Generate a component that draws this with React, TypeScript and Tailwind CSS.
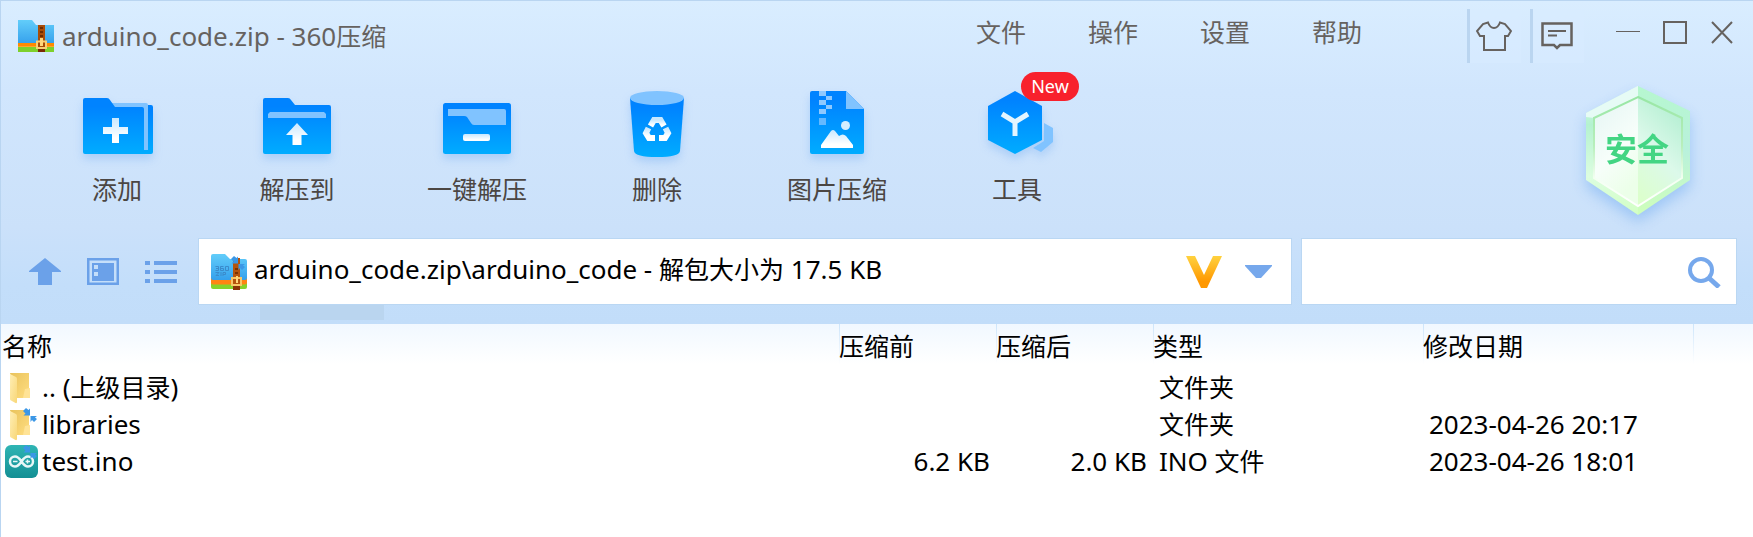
import type { ReactNode } from "react";

function Latin({ children }: { children: ReactNode }) {
  return <span className="text-[26px]">{children}</span>;
}

function Gradients() {
  return (
    <svg width="0" height="0" className="absolute" aria-hidden="true">
      <defs>
        <linearGradient id="blue" x1="0" y1="0" x2="0" y2="1">
          <stop offset="0.15" stopColor="#0083ff" />
          <stop offset="1" stopColor="#00acff" />
        </linearGradient>
        <linearGradient id="glyph" x1="0" y1="0" x2="0" y2="1">
          <stop offset="0" stopColor="#c9e8ff" />
          <stop offset="0.8" stopColor="#ffffff" />
        </linearGradient>
        <linearGradient id="sky" x1="0" y1="0" x2="0" y2="1">
          <stop offset="0" stopColor="#62cdfa" />
          <stop offset="1" stopColor="#35a0ec" />
        </linearGradient>
        <linearGradient id="gold" x1="0" y1="0" x2="0" y2="1">
          <stop offset="0" stopColor="#ffd23f" />
          <stop offset="0.8" stopColor="#ff9800" />
        </linearGradient>
        <linearGradient id="folderFront" x1="0" y1="0" x2="1" y2="1">
          <stop offset="0" stopColor="#ffeeb4" />
          <stop offset="1" stopColor="#f8d778" />
        </linearGradient>
        <linearGradient id="folderBack" x1="0" y1="0" x2="1" y2="1">
          <stop offset="0" stopColor="#e9c35c" />
          <stop offset="1" stopColor="#ffdd80" />
        </linearGradient>
        <linearGradient id="teal" x1="0" y1="0" x2="0" y2="1">
          <stop offset="0" stopColor="#2fb5b4" />
          <stop offset="1" stopColor="#138f94" />
        </linearGradient>
        <linearGradient id="rim" x1="0" y1="0" x2="0" y2="1">
          <stop offset="0" stopColor="#dffcf0" />
          <stop offset="0.3" stopColor="#b4f2d0" />
          <stop offset="0.7" stopColor="#dcfde0" />
          <stop offset="1" stopColor="#d2ffc4" />
        </linearGradient>
        <linearGradient id="rimRight" x1="0" y1="0" x2="0" y2="1">
          <stop offset="0" stopColor="#b6f7cf" />
          <stop offset="0.5" stopColor="#b9f1dc" />
          <stop offset="1" stopColor="#cfffba" />
        </linearGradient>
        <linearGradient id="faceLeft" x1="0" y1="0" x2="0.4" y2="1">
          <stop offset="0" stopColor="#e4f5f4" />
          <stop offset="0.6" stopColor="#f7fefa" />
          <stop offset="1" stopColor="#ecffe9" />
        </linearGradient>
        <linearGradient id="faceRight" x1="0.6" y1="0" x2="0.2" y2="1">
          <stop offset="0" stopColor="#b5efd3" />
          <stop offset="0.5" stopColor="#dcf9ea" />
          <stop offset="1" stopColor="#dcffcc" />
        </linearGradient>
        <linearGradient id="faceLine" x1="0" y1="0" x2="0" y2="1">
          <stop offset="0" stopColor="#98e6a4" />
          <stop offset="0.45" stopColor="#b8efbc" />
          <stop offset="0.75" stopColor="#f4fff2" />
          <stop offset="1" stopColor="#ffffff" />
        </linearGradient>
      </defs>
    </svg>
  );
}

function ToolIcon({ children }: { children: ReactNode }) {
  return (
    <svg width="80" height="84" viewBox="0 0 80 84" className="overflow-visible drop-shadow-[0_5px_4px_rgba(80,150,240,0.28)]" aria-hidden="true">
      {children}
    </svg>
  );
}

const addIcon = (
  <ToolIcon>
    <path d="M30 19H66L68 21H74Q76 21 76 23V68Q76 70 74 70H60Z" fill="url(#blue)" />
    <path d="M32 19H69Q71 19 71 21V66H64V24H34Z" fill="#80c3ff" />
    <path d="M8 14H30Q32 14 33 16L38 23H65Q67 23 67 25V70H8Q6 70 6 68V16Q6 14 8 14Z" fill="url(#blue)" />
    <path d="M35 34h7v9h9v7h-9v9h-7v-9h-9v-7h9z" fill="url(#glyph)" />
  </ToolIcon>
);

const extractToIcon = (
  <ToolIcon>
    <path d="M8 14H31Q33 14 34 16L38 21H72Q74 21 74 23V68Q74 70 72 70H8Q6 70 6 68V16Q6 14 8 14Z" fill="url(#blue)" />
    <path d="M13 28H67L69 30V34H11V30Z" fill="#80c3ff" />
    <path d="M40 39L51 51H44.500V61H35.500V51H29Z" fill="url(#glyph)" />
  </ToolIcon>
);

const extractHereIcon = (
  <ToolIcon>
    <rect x="6" y="19" width="68" height="51" rx="2.500" fill="url(#blue)" />
    <path d="M11 25H67Q69 25 69 27V41H37Q35 41 34 39L30 33Q29 32 27 32H11Z" fill="#80c3ff" />
    <rect x="26" y="50" width="27" height="7" rx="2" fill="url(#glyph)" />
  </ToolIcon>
);

const deleteIcon = (
  <ToolIcon>
    <path d="M13 14H67L63 67Q62 73 40 73T17 67Z" fill="url(#blue)" />
    <ellipse cx="40" cy="14" rx="27" ry="7" fill="#80c3ff" />
    <g fill="none" stroke="url(#glyph)" strokeWidth="6">
      <path d="M33.500 42L37 36H43.500L47 42" />
      <path d="M48.500 44L51 49L48 54H42" />
      <path d="M38 54H32L29 49L31.500 44" />
    </g>
  </ToolIcon>
);

const imageIcon = (
  <ToolIcon>
    <path d="M15 7H49L67 25V68Q67 70 65 70H15Q13 70 13 68V9Q13 7 15 7Z" fill="url(#blue)" />
    <path d="M49 7L67 25H49Z" fill="#80c3ff" />
    <g fill="#8fc9ff">
      <path d="M22 7h7v5h-7zM29 12h6v4h-6zM22 16h7v5h-7zM29 21h6v4h-6zM22 25h7v5h-7z" />
      <path d="M22 34h7v7h-7z" opacity="0.7" />
    </g>
    <circle cx="48.500" cy="41.500" r="4.500" fill="#d3edff" />
    <path d="M24 64V61L34 47Q36 45 38 47L42 52Q46 49 49 52L56 61V64Z" fill="url(#glyph)" />
  </ToolIcon>
);

const toolsIcon = (
  <ToolIcon>
    <path d="M67 39L76 44V58L64 68L56 64L67 57Z" fill="#80c3ff" />
    <path d="M38 7L65 22V56L38 70L11 56V22Z" fill="url(#blue)" />
    <path d="M25 30L38 38L51 30M38 37V52" fill="none" stroke="#e4f5ff" strokeWidth="5" />
  </ToolIcon>
);

const tools = [
  { label: "添加", icon: addIcon },
  { label: "解压到", icon: extractToIcon },
  { label: "一键解压", icon: extractHereIcon },
  { label: "删除", icon: deleteIcon },
  { label: "图片压缩", icon: imageIcon },
  { label: "工具", icon: toolsIcon, badge: "New" },
];

function AppIcon() {
  return (
    <svg width="36" height="32" viewBox="0 0 36 32" aria-hidden="true">
      <path d="M0 0H14L18 5H36V24H0Z" fill="url(#sky)" />
      <rect y="23" width="36" height="5" fill="#ff8a00" />
      <rect y="27" width="36" height="5" fill="#7ed02c" />
      <rect y="26" width="36" height="1" fill="#ffa42e" />
      <path d="M20 5h7v27h-7z" fill="#a84c08" />
      <path d="M22 7h3v2h-3zM22 11h3v2h-3zM22 15h3v2h-3z" fill="#6e2c00" />
      <path d="M20 29h7v3h-7z" fill="#7a2a05" />
      <rect x="19" y="21.500" width="9" height="6.500" fill="none" stroke="#f8cf74" strokeWidth="2" />
      <path d="M22 18h3v8h-3z" fill="#ffd67b" />
    </svg>
  );
}

function ShrinkArrows() {
  return (
    <g fill="#3b97e6">
      <path d="M0 3L3 0L5.500 2L7 0.500V7.500H0.500L2.500 5.500Z" />
      <path d="M14 11L11 14L9 12L7.500 14V8H14L12 9.500Z" />
    </g>
  );
}

function ArchiveIcon() {
  return (
    <svg width="36" height="36" viewBox="0 0 36 36" className="shrink-0" aria-hidden="true">
      <rect y="24" width="36" height="11" rx="2" fill="#86d32b" />
      <rect y="22" width="36" height="8.500" rx="2" fill="#ff8512" />
      <path d="M2 0H14L19 5H34Q36 5 36 7V24Q36 26 34 26H2Q0 26 0 24V2Q0 0 2 0Z" fill="url(#sky)" />
      <g fill="none" stroke="#3b8bcb" strokeWidth="1">
        <path d="M4.500 12.500H7.500V16.500H4.500M5 14.500H7.500M12.500 12.500H9.500V16.500H12.500V14.500H10M14.500 12.500H17.500V16.500H14.500Z" />
        <path d="M4.500 18.500H8L5 21.500H8M10 18V22M12 22V18.500H14.500V20.500H12" />
      </g>
      <path d="M22 4h7v32h-7z" fill="#b4540d" />
      <path d="M24 14h3v2h-3zM24 18h3v2h-3z" fill="#7c3100" />
      <path d="M22 31h7v5h-7z" fill="#8a3407" />
      <rect x="21" y="24" width="9" height="7" fill="none" stroke="#f7c767" strokeWidth="2" />
      <path d="M25 22h2v7h-2z" fill="#ffd67b" />
      <g transform="translate(20 2)">
        <ShrinkArrows />
      </g>
    </svg>
  );
}

function FolderIcon({ packed = false }: { packed?: boolean }) {
  return (
    <svg width="34" height="34" viewBox="0 0 34 34" className="shrink-0" aria-hidden="true">
      <path d="M5 2H24V27H12Z" fill="url(#folderBack)" />
      <path d="M20 18L25 17V27H18Z" fill="#ffe396" />
      <path d="M5 3L11 6Q12 6.500 12 8V31Q12 32.500 10.500 32L6 29.500Q5 29 5 28Z" fill="url(#folderFront)" />
      {packed && (
        <g transform="translate(18 0)">
          <ShrinkArrows />
        </g>
      )}
    </svg>
  );
}

function InoIcon() {
  return (
    <svg width="34" height="34" viewBox="0 0 34 34" className="shrink-0" aria-hidden="true">
      <rect x="0" y="0" width="33" height="33" rx="6" fill="url(#teal)" />
      <g fill="none" stroke="#e8f7f7" strokeWidth="2.500">
        <path d="M16.500 16.500C13.500 12 12 11.500 10 11.500A5 5 0 0 0 10 21.500C12 21.500 13.500 21 16.500 16.500C19.500 12 21 11.500 23 11.500A5 5 0 0 1 23 21.500C21 21.500 19.500 21 16.500 16.500Z" />
      </g>
      <path d="M8 16.500H12.500M20.500 16.500H25M22.500 14.500V18.500" stroke="#e8f7f7" strokeWidth="1.500" />
      <g transform="translate(18 0)">
        <ShrinkArrows />
      </g>
    </svg>
  );
}

function Shield() {
  return (
    <svg width="104" height="129" viewBox="0 0 104 129" className="drop-shadow-[0_7px_7px_rgba(100,165,240,0.45)]" role="img" aria-label="安全">
      <path d="M52 0V129L0 94V27Z" fill="url(#rim)" />
      <path d="M52 0L104 25V94L52 129Z" fill="url(#rimRight)" />
      <path d="M52 0L0 27V31L8 32L52 11Z" fill="#e6fbf5" />
      <path d="M52 11V120L8 92V32Z" fill="url(#faceLeft)" />
      <path d="M52 11L96 32V92L52 120Z" fill="url(#faceRight)" />
      <path d="M52 11L96 32V92L52 120L8 92V32Z" fill="none" stroke="url(#faceLine)" strokeWidth="2" />
      <text x="51" y="75" textAnchor="middle" fontSize="32" fontWeight="700" fill="#43d583" fontFamily="'Noto Sans CJK SC', sans-serif">
        安全
      </text>
    </svg>
  );
}

const menus = ["文件", "操作", "设置", "帮助"];

const rows = [
  { name: <>.. (<span className="text-[25px]">上级目录</span>)</>, icon: <FolderIcon />, before: "", after: "", type: "文件夹", date: "" },
  { name: <>libraries</>, icon: <FolderIcon packed />, before: "", after: "", type: "文件夹", date: "2023-04-26 20:17" },
  { name: <>test.ino</>, icon: <InoIcon />, before: "6.2 KB", after: "2.0 KB", type: <><Latin>INO</Latin> 文件</>, date: "2023-04-26 18:01" },
];

const headings = ["名称", "压缩前", "压缩后", "类型", "修改日期", ""];

export default function App() {
  return (
    <div className="min-h-screen border-t border-l border-[#b9d5f1] bg-white font-['Noto_Sans','Noto_Sans_CJK_SC',sans-serif] text-[25px] text-black">
      <Gradients />
      <header className="bg-[linear-gradient(#d9edff_0%,#d1e6fd_28%,#cbe1fa_70%,#c3defa_88%,#c2ddf9_100%)]">
        <div className="flex h-[65px] items-start justify-between pr-[19px] pl-[17px] text-[#66625f]">
          <h1 className="flex items-center gap-[8px] pt-[15px] leading-[40px] font-normal whitespace-nowrap">
            <AppIcon />
            <span>
              <Latin>arduino_code.zip - 360</Latin>压缩
            </span>
          </h1>
          <div className="flex items-start">
            <nav className="mr-[105px] flex gap-[62px] pt-[11px] leading-[40px]">
              {menus.map((m) => (
                <button key={m} type="button">{m}</button>
              ))}
            </nav>
            <button type="button" aria-label="皮肤" className="mt-[8px] flex h-[54px] w-[54px] items-center border-l-[3px] border-[#bad5f0] bg-[#d9ecff]/50 pl-[6px]">
              <svg width="36" height="30" viewBox="0 0 36 30" fill="none" stroke="#66625f" strokeWidth="2" aria-hidden="true">
                <path d="M12 1.500Q14 7 18 7T24 1.500L29 3L35 10L32 15H29V29H8V15H4L1 10L7 3Z" />
              </svg>
            </button>
            <button type="button" aria-label="反馈" className="mt-[8px] ml-[9px] flex h-[54px] w-[54px] items-center border-l-[3px] border-[#bad5f0] bg-[#d9ecff]/50 pl-[8px]">
              <svg width="32" height="28" viewBox="0 0 32 28" fill="none" stroke="#66625f" aria-hidden="true">
                <path d="M1.500 1.500H30.500V23H19L16 26L13 23H1.500Z" strokeWidth="2.500" />
                <path d="M7 9H25M7 13.500H16" strokeWidth="2" />
              </svg>
            </button>
            <div className="mt-[20px] ml-[32px] flex gap-[23px]">
              <button type="button" aria-label="最小化">
                <svg width="24" height="24" stroke="#66625f" aria-hidden="true"><path d="M0 10.500H24" /></svg>
              </button>
              <button type="button" aria-label="最大化">
                <svg width="24" height="24" fill="none" stroke="#66625f" strokeWidth="2" aria-hidden="true"><path d="M1 1H23V22H1Z" /></svg>
              </button>
              <button type="button" aria-label="关闭">
                <svg width="24" height="24" fill="none" stroke="#66625f" strokeWidth="2" aria-hidden="true"><path d="M2 1L22 22M22 1L2 22" /></svg>
              </button>
            </div>
          </div>
        </div>

        <div className="flex h-[172px] items-start justify-between pr-[63px] pl-[26px]">
          <div className="flex pt-[18px]">
            {tools.map((t) => (
              <button key={t.label} type="button" className="relative flex w-[180px] flex-col items-center text-[#4b4643]">
                {t.icon}
                <span className="leading-[42px]">{t.label}</span>
                {t.badge && (
                  <span className="absolute -top-[12px] left-[94px] flex h-[29px] w-[58px] items-center justify-center rounded-full bg-[#f8212c] text-[18px] text-white">
                    {t.badge}
                  </span>
                )}
              </button>
            ))}
          </div>
          <div className="pt-[20px]">
            <Shield />
          </div>
        </div>

        <div className="flex h-[67px] items-stretch pr-[16px] pl-[28px]">
          <div className="flex w-[169px] shrink-0 items-center gap-[26px] text-[#6ba1e9]">
            <button type="button" aria-label="向上">
              <svg width="32" height="28" fill="currentColor" aria-hidden="true"><path d="M16 0L32 13V14H23V27H9V14H0V13Z" /></svg>
            </button>
            <button type="button" aria-label="预览">
              <svg width="32" height="28" fill="currentColor" aria-hidden="true">
                <path fillRule="evenodd" d="M0 0H32V27H0ZM2.500 2.500V24.500H29.500V2.500Z" />
                <path fillRule="evenodd" d="M5 5H27V23H5ZM7 7V11H11V7ZM7 14V18H11V14Z" />
              </svg>
            </button>
            <button type="button" aria-label="列表">
              <svg width="32" height="28" fill="currentColor" aria-hidden="true">
                <path d="M0 3h5v4h-5zM9 3h23v4h-23zM0 12h5v4h-5zM9 12h23v4h-23zM0 21h5v4h-5zM9 21h23v4h-23z" />
              </svg>
            </button>
          </div>
          <div className="flex min-w-0 flex-1 items-center gap-[7px] border border-[#bad7f3] bg-white pr-[19px] pl-[12px]">
            <ArchiveIcon />
            <span className="flex-1 pb-[4px] whitespace-nowrap">
              <Latin>arduino_code.zip\arduino_code - </Latin>解包大小为<Latin> 17.5 KB</Latin>
            </span>
            <button type="button" aria-label="会员">
              <svg width="36" height="32" aria-hidden="true"><path d="M0 0H9L18 19L27 0H36L21 32H15Z" fill="url(#gold)" /></svg>
            </button>
            <button type="button" aria-label="展开" className="ml-[16px]">
              <svg width="27" height="14" fill="#76a8ec" aria-hidden="true"><path d="M0 0H27V1L16 13H11L0 1Z" /></svg>
            </button>
          </div>
          <form className="ml-[9px] flex w-[436px] items-center border border-[#bad7f3] bg-white pr-[14px]">
            <input type="text" aria-label="搜索" className="h-full min-w-0 flex-1 px-3 outline-none" />
            <button type="button" aria-label="搜索">
              <svg width="34" height="32" fill="none" stroke="#76a8ec" strokeWidth="4" aria-hidden="true">
                <circle cx="13" cy="14" r="11" />
                <path d="M21.500 22.500L31 31" strokeWidth="5" />
              </svg>
            </button>
          </form>
        </div>
        <div className="h-[19px] pl-[259px]">
          <div className="h-[15px] w-[124px] bg-[#bad5ef]" />
        </div>
      </header>

      <table className="w-full table-fixed border-collapse text-left">
        <colgroup>
          <col className="w-[838px]" />
          <col className="w-[157px]" />
          <col className="w-[157px]" />
          <col className="w-[270px]" />
          <col className="w-[270px]" />
          <col />
        </colgroup>
        <thead>
          <tr className="h-[45px] bg-[linear-gradient(#f1f8ff,#ffffff_90%)]">
            {headings.map((h, i) => (
              <th
                key={i}
                scope="col"
                className={
                  i === 0
                    ? "p-0 pb-[2px] pl-[1px] leading-[40px] font-normal"
                    : "bg-[linear-gradient(#cde5fb,#ffffff)] bg-[length:1px_40px] bg-no-repeat p-0 pb-[2px] leading-[40px] font-normal"
                }
              >
                {h}
              </th>
            ))}
          </tr>
        </thead>
        <tbody>
          {rows.map((r, i) => (
            <tr key={i} className="h-[37px] leading-[34px]">
              <td className="p-0 pl-[4px] text-[26px]">
                <span className="flex items-center gap-[3px]">
                  {r.icon}
                  <span className="pb-[2px]">{r.name}</span>
                </span>
              </td>
              <td className="p-0 pr-[6px] pb-[2px] text-right text-[26px]">{r.before}</td>
              <td className="p-0 pr-[6px] pb-[2px] text-right text-[26px]">{r.after}</td>
              <td className="p-0 pb-[2px] pl-[6px]">{r.type}</td>
              <td className="p-0 pb-[2px] pl-[6px] text-[26px] whitespace-nowrap">{r.date}</td>
              <td className="p-0" />
            </tr>
          ))}
        </tbody>
      </table>
    </div>
  );
}
